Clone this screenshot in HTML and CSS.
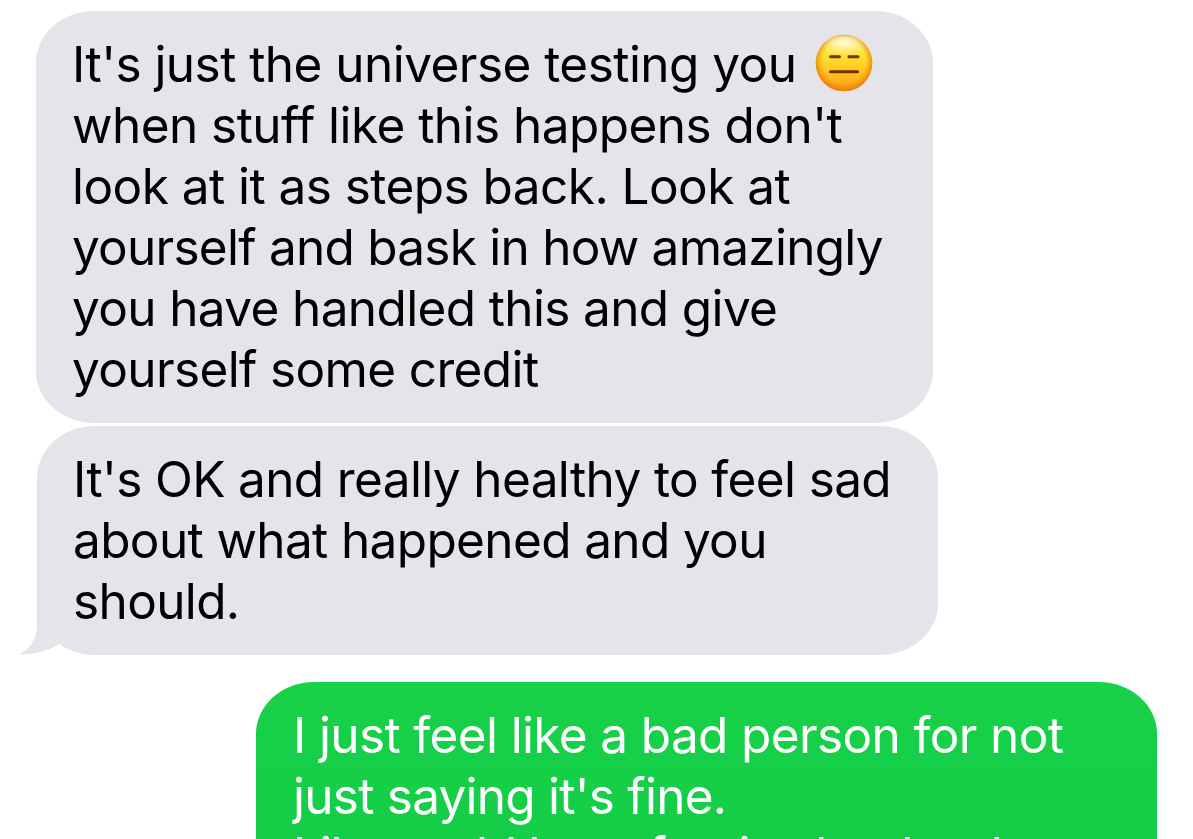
FILE: index.html
```
<!DOCTYPE html>
<html lang="en">
<head>
    <meta charset="UTF-8">
    <meta name="viewport" content="width=device-width, initial-scale=1.0">
    <title>Messages</title>
    <link rel="stylesheet" href="styles.css">
</head>
<body>
    <div class="chat">
        <div class="bubble received first">
            <p class="loose">It's just the universe testing you
                <svg class="emoji" viewBox="0 0 58 58">
                    <defs>
                        <linearGradient id="face" x1="0" y1="0" x2="0" y2="1">
                            <stop offset="0" stop-color="#fff27c"/>
                            <stop offset="0.4" stop-color="#ffdf2c"/>
                            <stop offset="0.75" stop-color="#ffb91f"/>
                            <stop offset="1" stop-color="#f79c1c"/>
                        </linearGradient>
                        <radialGradient id="edge" cx="0.5" cy="0.48" r="0.52">
                            <stop offset="0.72" stop-color="#f08a00" stop-opacity="0"/>
                            <stop offset="1" stop-color="#e27800" stop-opacity="0.85"/>
                        </radialGradient>
                        <radialGradient id="shine" cx="0.5" cy="0.3" r="0.6">
                            <stop offset="0" stop-color="#fff" stop-opacity="0.75"/>
                            <stop offset="1" stop-color="#fff" stop-opacity="0"/>
                        </radialGradient>
                    </defs>
                    <circle cx="29" cy="29" r="28.3" fill="url(#face)"/>
                    <circle cx="29" cy="29" r="28.3" fill="url(#edge)"/>
                    <ellipse cx="29" cy="13" rx="20" ry="11" fill="url(#shine)"/>
                    <path d="M15.5 22.8h9M34 22.8h9M15.5 37.8h27" stroke="#713000" stroke-width="3" stroke-linecap="round"/>
                </svg>
            </p>
            <p class="loose">when stuff like this happens don't</p>
            <p class="loose">look at it as steps back. Look at</p>
            <p class="tight">yourself and bask in how amazingly</p>
            <p>you have handled this and give</p>
            <p>yourself some credit</p>
        </div>

        <div class="bubble received second">
            <p>It's OK and really healthy to feel sad</p>
            <p>about what happened and you</p>
            <p>should.</p>
            <svg class="tail" viewBox="0 0 50 50">
                <path d="M17 0V22C17 34 9 45 -1 49.5Q22 50 39 39L50 20V0Z"/>
            </svg>
        </div>

        <div class="bubble sent">
            <p>I just feel like a bad person for not</p>
            <p class="tight">just saying it's fine.</p>
            <p class="last">Lily would have forgive her hard</p>
        </div>
    </div>
</body>
</html>
```
FILE: styles.css
```
* {
    margin: 0;
    padding: 0;
    box-sizing: border-box;
}

body {
    font-family: Inter, "Liberation Sans", sans-serif;
    font-size: 49.5px;
    line-height: 61px;
    letter-spacing: -0.63px;
    background-color: #fff;
    color: #000;
    height: 839px;
    overflow: hidden;
}

.chat {
    display: flex;
    flex-direction: column;
    padding-top: 11px;
}

.bubble {
    padding: 23px 36px 23px 36px;
    border-radius: 58px / 52px;
    white-space: nowrap;
}

.bubble p {
    height: 61px;
}

.loose {
    letter-spacing: -0.54px;
}

.tight {
    letter-spacing: -0.75px;
}

.received {
    background-color: #e5e4ea;
}

.first {
    width: 897px;
    margin-left: 36px;
}

.second {
    position: relative;
    width: 901px;
    height: 229px;
    margin: 3px 0 0 37px;
}

.sent {
    width: 901px;
    height: 157px;
    margin: 27px 0 0 256px;
    padding-left: 37px;
    padding-bottom: 0;
    border-bottom-left-radius: 0;
    border-bottom-right-radius: 0;
    overflow: hidden;
    background: linear-gradient(#18d149, #14ce47);
    color: #fff;
}

.sent .last {
    margin-top: -2px;
    letter-spacing: -1.2px;
}

/* little curl at the bottom left of the last bubble */
.tail {
    position: absolute;
    left: -17px;
    bottom: 0;
    width: 50px;
    height: 50px;
    overflow: visible;
    fill: #e5e4ea;
}

.emoji {
    width: 58px;
    height: 58px;
    margin-left: 5px;
    vertical-align: -10px;
}
```
